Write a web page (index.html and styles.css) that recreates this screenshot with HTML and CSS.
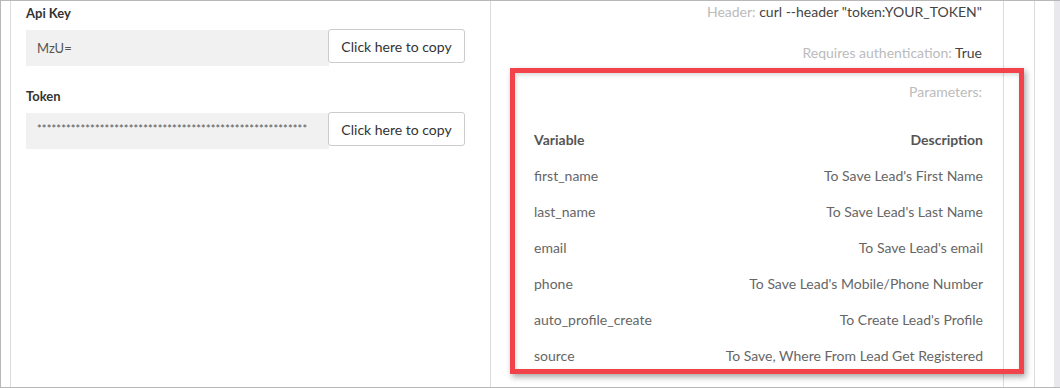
FILE: index.html
```html
<!DOCTYPE html>
<html lang="en">
<head>
  <meta charset="UTF-8" />
  <title>API Settings</title>
  <link rel="stylesheet" href="styles.css">
</head>
<body>

<div class="frame">
  <div class="panel">
    <div class="keys">
      <div class="field">
        <label>Api Key</label>
        <div class="copy-row">
          <div class="value">MzU=</div>
          <button>Click here to copy</button>
        </div>
      </div>
      <div class="field">
        <label>Token</label>
        <div class="copy-row">
          <div class="value stars">********************************************************</div>
          <button>Click here to copy</button>
        </div>
      </div>
    </div>

    <div class="docs">
      <p class="meta"><span class="muted">Header:</span> curl --header "token:YOUR_TOKEN"</p>
      <p class="meta auth"><span class="muted">Requires authentication:</span> True</p>
      <p class="meta params"><span class="muted">Parameters:</span></p>

      <table class="vars">
        <tr><th>Variable</th><th>Description</th></tr>
        <tr><td>first_name</td><td>To Save Lead's First Name</td></tr>
        <tr><td>last_name</td><td>To Save Lead's Last Name</td></tr>
        <tr><td>email</td><td>To Save Lead's email</td></tr>
        <tr><td>phone</td><td>To Save Lead's Mobile/Phone Number</td></tr>
        <tr><td>auto_profile_create</td><td>To Create Lead's Profile</td></tr>
        <tr><td>source</td><td>To Save, Where From Lead Get Registered</td></tr>
      </table>

      <!-- annotation box -->
      <div class="highlight"></div>
    </div>

    <div class="gutter"></div>
  </div>
  <div class="scroll"></div>
</div>

</body>
</html>
```

FILE: styles.css
```css
body { margin: 0; font-family: Lato, "Open Sans", sans-serif; background: #fff; color: #555; }
.frame { width: 1060px; height: 388px; box-sizing: border-box; border: 1px solid #b8b8b8; border-right: none; display: flex; overflow: hidden; }
.panel { flex: 1; display: flex; margin-left: 9px; border-left: 1px solid #dcdcdc; }

.keys { width: 464px; padding: 3px 0 0 15px; border-right: 1px solid #dcdcdc; }
.field { margin-bottom: 21px; }
.field label { display: block; font-size: 13px; font-weight: 700; color: #333; line-height: 18px; margin-bottom: 8px; }
.copy-row { display: flex; align-items: flex-start; }
.value { width: 292px; height: 36px; background: #f1f1f1; padding-left: 11px; font-size: 13px; line-height: 36px; color: #555; }
.stars { font-size: 11px; line-height: 32px; letter-spacing: 0.15px; color: #555; overflow: hidden; white-space: nowrap; }
.copy-row button { margin: -1px 0 0 -1px; width: 137px; height: 34px; background: #fff; border: 1px solid #ccc; border-radius: 3px; font-family: inherit; font-size: 14px; color: #333; padding: 0; }

.docs { position: relative; width: 491px; padding: 2px 21px 0 0; border-right: 1px solid #dcdcdc; text-align: right; }
.meta { margin: 0; font-size: 14px; line-height: 18px; color: #444; }
.muted { color: #bbb; }
.auth { margin-top: 23px; }
.params { margin-top: 21px; }
.vars { width: 449px; margin: 20px 0 0 43px; border-collapse: collapse; font-size: 14px; color: #666; }
.vars th, .vars td { height: 36px; padding: 0; text-align: left; }
.vars th:last-child, .vars td:last-child { text-align: right; }
.vars th { font-weight: 700; color: #555; }

.highlight { position: absolute; left: 19px; top: 67px; width: 504px; height: 296px; border: 5px solid #f2434b; box-shadow: 2px 3px 6px rgba(0, 0, 0, 0.35), inset 1px 2px 4px rgba(0, 0, 0, 0.15); }

.gutter { width: 30px; border-right: 1px solid #dcdcdc; }
.scroll { width: 6px; margin-left: 19px; background: #e9e9ed; }
```
